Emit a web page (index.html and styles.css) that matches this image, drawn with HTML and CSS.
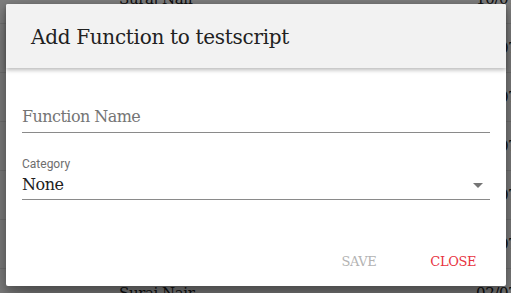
FILE: index.html
```html
<!DOCTYPE html>
<html>
<head>
<meta charset="utf-8">
<link rel="stylesheet" href="styles.css">
</head>
<body>
<div class="page">
  <div class="rows">
    <div class="row"><span class="name">Suraj Nair</span><span class="date">10/07/2019</span></div>
    <div class="row"><span class="name">Suraj Nair</span><span class="date">10/07/2019</span></div>
    <div class="row"><span class="name">Suraj Nair</span><span class="date">10/07/2019</span></div>
    <div class="row"><span class="name">Suraj Nair</span><span class="date">10/07/2019</span></div>
    <div class="row"><span class="name">Suraj Nair</span><span class="date">10/07/2019</span></div>
    <div class="row"><span class="name">Suraj Nair</span><span class="date">10/07/2019</span></div>
    <div class="row"><span class="name">Suraj Nair</span><span class="date">02/07/2019</span></div>
  </div>
  <div class="overlay"></div>
  <div class="dialog">
    <div class="dialog-header">
      <h2 class="dialog-title">Add Function to testscript</h2>
    </div>
    <div class="dialog-body">
      <div class="field text-field">
        <span class="placeholder">Function Name</span>
      </div>
      <div class="field select-field">
        <label class="field-label">Category</label>
        <div class="select">
          <span class="select-value">None</span>
          <svg class="select-arrow" width="10" height="5" viewBox="0 0 10 5"><path d="M0 0 L10 0 L5 5 Z" fill="#757575"/></svg>
        </div>
      </div>
    </div>
    <div class="dialog-actions">
      <button class="btn btn-disabled">SAVE</button>
      <button class="btn btn-close">CLOSE</button>
    </div>
  </div>
</div>
</body>
</html>
```

FILE: styles.css
```css
* { box-sizing: border-box; }
html, body { margin: 0; padding: 0; }
body {
  width: 511px;
  height: 293px;
  overflow: hidden;
  background: #fff;
  font-family: "DejaVu Serif", serif;
}
.page {
  position: relative;
  width: 511px;
  height: 293px;
  overflow: hidden;
}
.rows {
  margin-top: -25px;
}
.row {
  height: 49px;
  border-bottom: 1px solid #e6e6e6;
  display: flex;
  align-items: center;
  font-size: 15px;
  letter-spacing: -0.4px;
  color: #222;
  white-space: nowrap;
}
.name { margin-left: 119px; width: 357px; flex-shrink: 0; }
.date { flex-shrink: 0; }
.overlay {
  position: absolute;
  inset: 0;
  background: rgba(0, 0, 0, 0.5);
}
.dialog {
  position: absolute;
  left: 6px;
  top: 4px;
  width: 500px;
  height: 282px;
  background: #fff;
  border-radius: 2px;
  box-shadow: 0 10px 30px rgba(0,0,0,0.3), 0 6px 10px rgba(0,0,0,0.22);
  display: flex;
  flex-direction: column;
}
.dialog-header {
  height: 64px;
  background: #f2f2f2;
  box-shadow: 0 2px 4px rgba(0,0,0,0.28);
  display: flex;
  align-items: center;
  padding-left: 25px;
  position: relative;
  z-index: 1;
  border-radius: 2px 2px 0 0;
}
.dialog-title {
  margin: 0;
  font-weight: 400;
  font-size: 20px;
  letter-spacing: -0.3px;
  color: #212121;
  line-height: 24px;
  padding-top: 2px;
}
.dialog-body {
  padding: 39px 16px 0 16px;
  flex: 1;
}
.field { width: 468px; }
.text-field {
  height: 26px;
  line-height: 20px;
  border-bottom: 1px solid #8a8a8a;
  font-size: 16px;
  letter-spacing: -0.55px;
  color: #757575;
}
.select-field { margin-top: 24px; }
.field-label {
  display: block;
  font-family: Roboto, sans-serif;
  font-size: 12px;
  line-height: 14px;
  color: #6e6e6e;
}
.select {
  margin-top: 4px;
  height: 25px;
  border-bottom: 1px solid #8a8a8a;
  display: flex;
  justify-content: space-between;
  align-items: flex-start;
  font-size: 16px;
  letter-spacing: -0.5px;
  line-height: 20px;
  color: #212121;
}
.select-arrow { margin-top: 8px; margin-right: 7px; }
.dialog-actions {
  display: flex;
  justify-content: flex-end;
  gap: 22px;
  padding: 0 14px 16px 0;
}
.btn {
  font-family: "DejaVu Serif", serif;
  font-size: 13px;
  letter-spacing: -0.4px;
  line-height: 16px;
  background: none;
  border: none;
  padding: 0 16px;
}
.btn-disabled { color: #b3b3b3; }
.btn-close { color: #e8333f; }
```
